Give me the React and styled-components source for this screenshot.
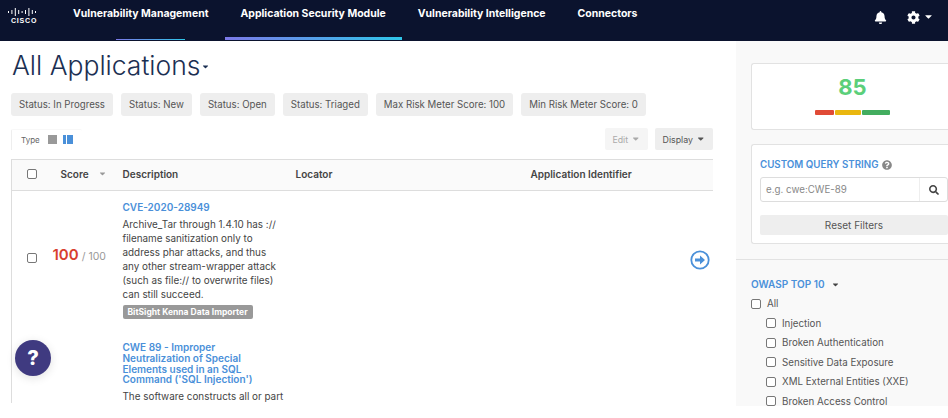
import React from 'react';
import styled, { createGlobalStyle } from 'styled-components';
import { FaBell, FaCog, FaCaretDown, FaSearch, FaQuestionCircle } from 'react-icons/fa';

const GlobalStyle = createGlobalStyle`
  html, body {
    margin: 0;
    padding: 0;
    background: #fff;
    font-family: Inter, "Liberation Sans", sans-serif;
    color: #333;
  }
  * { box-sizing: border-box; }
`;

const Page = styled.div`
  position: relative;
  width: 948px;
  height: 406px;
  overflow: hidden;
`;

const NavBar = styled.nav`
  height: 41px;
  background: #0b132e;
  display: flex;
  color: #fff;
`;

const LogoWrap = styled.div`
  width: 57px;
  padding: 8px 0 0 8px;
  display: flex;
  flex-direction: column;
  align-items: flex-start;
`;

const LogoText = styled.span`
  font-size: 7px;
  line-height: 8px;
  font-weight: 700;
  letter-spacing: 0.8px;
  margin: 1px 0 0 3px;
  font-family: "Liberation Sans", sans-serif;
`;

const NavItems = styled.div`
  display: flex;
`;

const NavItem = styled.a`
  position: relative;
  padding: 7px 16px 0;
  font-size: 10.47px;
  line-height: 14px;
  font-weight: 700;
  white-space: nowrap;

  &::after {
    content: '';
    position: absolute;
    bottom: 1px;
    left: ${({ $short }) => ($short ? '59px' : '0')};
    right: ${({ $short }) => ($short ? '40px' : '0')};
    height: ${({ $active }) => ($active ? '3px' : '1px')};
    display: ${({ $active, $short }) => ($active || $short ? 'block' : 'none')};
    background: linear-gradient(90deg, #7c79e8, #2fc6ea);
  }
`;

const NavIcons = styled.div`
  margin-left: auto;
  padding: 11px 14px 0 0;
  display: flex;
  align-items: flex-start;
  font-size: 13px;
`;

const BellBtn = styled.span`
  margin-right: 20px;
  display: flex;
`;

const GearCaret = styled(FaCaretDown)`
  margin-left: 3px;
  font-size: 11px;
`;

const Main = styled.div`
  display: flex;
  height: 365px;
`;

const Content = styled.main`
  width: 736px;
  padding: 0 23px 0 11px;
  overflow: hidden;
`;

const TitleRow = styled.div`
  display: flex;
  align-items: center;
  height: 52px;
  padding-bottom: 4px;
`;

const Title = styled.h1`
  margin: 0 0 0 1px;
  font-size: 26.5px;
  font-weight: 300;
  line-height: 47px;
  color: #1b2f52;
`;

const TitleCaret = styled(FaCaretDown)`
  font-size: 9px;
  color: #1b2f52;
  margin-top: 3px;
`;

const Pills = styled.div`
  display: flex;
  gap: 8px;
`;

const Pill = styled.span`
  height: 23px;
  line-height: 23px;
  padding: 0 8px;
  background: #eee;
  border-radius: 3px;
  font-size: 9.67px;
  color: #555;
  white-space: nowrap;
`;

const Toolbar = styled.div`
  display: flex;
  align-items: center;
  margin-top: 12px;
  height: 22px;
`;

const TypeBox = styled.div`
  display: flex;
  align-items: center;
  width: 71px;
  height: 21px;
  padding-left: 9px;
  border-left: 1px solid #eee;
  border-top: 1px solid #f8f8f8;
  border-radius: 2px 2px 0 0;
  font-size: 8px;
  color: #666;
`;

const TypeIcon = styled.span`
  display: block;
  width: ${({ $wide }) => ($wide ? '10px' : '9px')};
  height: 9px;
  margin-left: ${({ $wide }) => ($wide ? '6px' : '8px')};
  background: ${({ $wide }) =>
    $wide
      ? 'linear-gradient(90deg, #4a90d9 0 3px, #fff 3px 4px, #4a90d9 4px)'
      : '#999'};
`;

const ToolButton = styled.button`
  display: flex;
  align-items: center;
  gap: 3px;
  height: 22px;
  padding: 0 7.5px;
  margin-left: ${({ $first }) => ($first ? 'auto' : '7px')};
  border: none;
  border-radius: 2px;
  font-family: inherit;
  font-size: 8.8px;
  background: ${({ $disabled }) => ($disabled ? '#f5f5f5' : '#eee')};
  color: ${({ $disabled }) => ($disabled ? '#aaa' : '#555')};
`;

const ToolCaret = styled(FaCaretDown)`
  font-size: 9.5px;
`;

const Table = styled.table`
  width: 702px;
  margin-top: 9px;
  border-collapse: collapse;
  table-layout: fixed;
  border-left: 1px solid #ddd;
`;

const HeadRow = styled.tr`
  height: 31px;
  background: #fafafa;
  border-top: 1px solid #ddd;
  border-bottom: 1px solid #ddd;
`;

const Th = styled.th`
  width: ${({ $w }) => $w || 'auto'};
  padding: 0 8px 3px;
  text-align: left;
  font-size: 10px;
  font-weight: 600;
  color: #444;
`;

const Td = styled.td`
  padding: ${({ $top }) => ($top ? '10px 8px 0' : '0 8px')};
  vertical-align: ${({ $top }) => ($top ? 'top' : 'middle')};
`;

const Check = styled.input.attrs({ type: 'checkbox' })`
  appearance: none;
  display: block;
  flex: none;
  width: 10px;
  height: 10px;
  margin: ${({ $center }) => ($center ? '0 0 0 7px' : '0')};
  background: #fff;
  border: 1px solid #777;
  border-radius: 2px;
`;

const SortCell = styled.div`
  display: flex;
  align-items: center;
  justify-content: space-between;
  color: #444;
`;

const SortCaret = styled(FaCaretDown)`
  color: #999;
  font-size: 9px;
`;

const ScoreWrap = styled.div`
  white-space: nowrap;
  margin: 0 0 8px -8px;
`;

const ScoreValue = styled.span`
  font-size: 15px;
  font-weight: 600;
  color: #d8402f;
`;

const ScoreMax = styled.span`
  font-size: 10.5px;
  color: #999;
  margin-left: 3px;
`;

const VulnTitle = styled.a`
  display: block;
  font-size: 10px;
  line-height: 10.7px;
  font-weight: 600;
  color: #4a90d9;
`;

const VulnText = styled.p`
  margin: 4px -3px 0 0;
  font-size: 9.9px;
  line-height: 14px;
  color: #444;
  white-space: ${({ $oneLine }) => ($oneLine ? 'nowrap' : 'normal')};
`;

const Badge = styled.span`
  display: block;
  width: fit-content;
  margin-top: 4px;
  padding: 0 5px;
  height: 14px;
  line-height: 14px;
  background: #999;
  border-radius: 2px;
  font-size: 8.5px;
  font-weight: 700;
  color: #fff;
  white-space: nowrap;
`;

const RowGap = styled.div`
  height: ${({ $h }) => $h};
`;

const ArrowCell = styled.div`
  display: flex;
  justify-content: flex-end;
  margin: 4px -5px 0 0;
`;

const Sidebar = styled.aside`
  flex: 1;
  background: #f9f9f9;
  display: flex;
  flex-direction: column;
  overflow: hidden;
`;

const SideTop = styled.div`
  padding: 22px 0 15px 15px;
  border-bottom: 1px solid #e2e2e2;
`;

const Card = styled.section`
  background: #fff;
  border: 1px solid #e2e2e2;
  border-right: none;
  border-radius: 3px 0 0 3px;
  width: 202px;
`;

const ScoreCard = styled(Card)`
  height: 67px;
  padding-top: 10px;
  margin-bottom: 14px;
  display: flex;
  flex-direction: column;
  align-items: center;
`;

const BigScore = styled.div`
  font-size: 22px;
  line-height: 27px;
  font-weight: 700;
  color: #5bcf7a;
`;

const Meter = styled.div`
  display: flex;
  gap: 1px;
  margin-top: 9px;
  width: 75px;
  height: 5px;
`;

const MeterPart = styled.span`
  flex: ${({ $f }) => $f};
  background: ${({ $c }) => $c};
  border-radius: 1px;
`;

const QueryCard = styled(Card)`
  height: 100px;
  padding: 14px 0 0 8px;
`;

const FilterHeading = styled.h4`
  margin: 0;
  display: flex;
  align-items: center;
  gap: 4px;
  font-size: ${({ $small }) => ($small ? '9.75px' : '10px')};
  line-height: 12px;
  font-weight: 600;
  color: #4a90d9;
`;

const HelpIcon = styled(FaQuestionCircle)`
  color: #888;
  font-size: 10px;
`;

const QueryInput = styled.div`
  display: flex;
  width: 188px;
  height: 25px;
  margin-top: 6px;
  border: 1px solid #ddd;
  border-radius: 3px;
`;

const QueryField = styled.span`
  flex: 1;
  padding-left: 5px;
  line-height: 23px;
  font-size: 9.75px;
  color: #888;
`;

const SearchBtn = styled.span`
  width: 28px;
  display: flex;
  align-items: center;
  justify-content: center;
  border-left: 1px solid #eee;
  font-size: 10px;
  color: #444;
`;

const ResetBtn = styled.button`
  display: block;
  width: 188px;
  height: 20px;
  margin-top: 13px;
  border: none;
  border-radius: 2px;
  background: #eee;
  font-family: inherit;
  font-size: 10px;
  color: #555;
`;

const FilterSection = styled.div`
  padding: 18px 0 0 15px;
`;

const FilterCaret = styled(FaCaretDown)`
  color: #444;
  font-size: 9px;
  margin-left: 3px;
`;

const FilterRow = styled.label`
  display: flex;
  align-items: center;
  height: 19.5px;
  gap: 6px;
  padding-left: ${({ $sub }) => ($sub ? '15px' : '0')};
  font-size: 9.75px;
  color: #555;
`;

const FilterList = styled.div`
  margin-top: 4px;
`;

const HelpFab = styled.button`
  position: absolute;
  left: 15px;
  top: 340px;
  width: 36px;
  height: 36px;
  border: none;
  border-radius: 50%;
  background: #3f3a80;
  color: #fff;
  font-family: inherit;
  font-size: 20px;
  font-weight: 800;
  box-shadow: 0 2px 10px rgba(0, 0, 0, 0.12);
`;

const CiscoMark = () => (
  <svg width="28" height="8" viewBox="0 0 28 8" fill="#fff">
    {[
      [0, 3, 2], [3.4, 2, 4], [6.8, 0, 8], [10.2, 2, 4], [13.6, 3, 2],
      [17, 2, 4], [20.4, 0, 8], [23.8, 2, 4], [27, 3, 2],
    ].map(([x, y, h]) => (
      <rect key={x} x={x} y={y} width="1" height={h} />
    ))}
  </svg>
);

const ArrowRing = () => (
  <svg width="20" height="20" viewBox="0 0 20 20">
    <circle cx="10" cy="10" r="8.7" fill="none" stroke="#4a90d9" strokeWidth="1.8" />
    <path d="M5 8.4h5V5.4l5 4.6-5 4.6v-3H5z" fill="#4a90d9" />
  </svg>
);

const filters = [
  'Injection',
  'Broken Authentication',
  'Sensitive Data Exposure',
  'XML External Entities (XXE)',
  'Broken Access Control',
];

const pills = [
  'Status: In Progress',
  'Status: New',
  'Status: Open',
  'Status: Triaged',
  'Max Risk Meter Score: 100',
  'Min Risk Meter Score: 0',
];

export default function App() {
  return (
    <Page>
      <GlobalStyle />
      <NavBar>
        <LogoWrap>
          <CiscoMark />
          <LogoText>CISCO</LogoText>
        </LogoWrap>
        <NavItems>
          <NavItem $short>Vulnerability Management</NavItem>
          <NavItem $active>Application Security Module</NavItem>
          <NavItem>Vulnerability Intelligence</NavItem>
          <NavItem>Connectors</NavItem>
        </NavItems>
        <NavIcons>
          <BellBtn><FaBell /></BellBtn>
          <FaCog />
          <GearCaret />
        </NavIcons>
      </NavBar>
      <Main>
        <Content>
          <TitleRow>
            <Title>All Applications</Title>
            <TitleCaret />
          </TitleRow>
          <Pills>
            {pills.map((p) => (
              <Pill key={p}>{p}</Pill>
            ))}
          </Pills>
          <Toolbar>
            <TypeBox>
              Type
              <TypeIcon />
              <TypeIcon $wide />
            </TypeBox>
            <ToolButton $first $disabled>Edit <ToolCaret /></ToolButton>
            <ToolButton>Display <ToolCaret /></ToolButton>
          </Toolbar>
          <Table>
            <thead>
              <HeadRow>
                <Th $w="41px"><Check $center /></Th>
                <Th $w="62px">
                  <SortCell>Score <SortCaret /></SortCell>
                </Th>
                <Th $w="173px">Description</Th>
                <Th $w="235px">Locator</Th>
                <Th>Application Identifier</Th>
              </HeadRow>
            </thead>
            <tbody>
              <tr>
                <Td><Check $center /></Td>
                <Td>
                  <ScoreWrap>
                    <ScoreValue>100</ScoreValue>
                    <ScoreMax>/ 100</ScoreMax>
                  </ScoreWrap>
                </Td>
                <Td $top>
                  <RowGap $h="1px" />
                  <VulnTitle>CVE-2020-28949</VulnTitle>
                  <VulnText>
                    Archive_Tar through 1.4.10 has :// filename sanitization only to address phar
                    attacks, and thus any other stream-wrapper attack (such as file:// to overwrite
                    files) can still succeed.
                  </VulnText>
                  <Badge>BitSight Kenna Data Importer</Badge>
                  <RowGap $h="7px" />
                </Td>
                <Td />
                <Td><ArrowCell><ArrowRing /></ArrowCell></Td>
              </tr>
              <tr>
                <Td />
                <Td />
                <Td $top>
                  <RowGap $h="6.6px" />
                  <VulnTitle>CWE 89 - Improper Neutralization of Special Elements used in an SQL Command ('SQL Injection')</VulnTitle>
                  <VulnText $oneLine>The software constructs all or part</VulnText>
                </Td>
                <Td />
                <Td />
              </tr>
            </tbody>
          </Table>
        </Content>
        <Sidebar>
          <SideTop>
            <ScoreCard>
              <BigScore>85</BigScore>
              <Meter>
                <MeterPart $f="19" $c="#e04a36" />
                <MeterPart $f="26" $c="#eab70f" />
                <MeterPart $f="28" $c="#43ad5f" />
              </Meter>
            </ScoreCard>
            <QueryCard>
              <FilterHeading $small>CUSTOM QUERY STRING <HelpIcon /></FilterHeading>
              <QueryInput>
                <QueryField>e.g. cwe:CWE-89</QueryField>
                <SearchBtn><FaSearch /></SearchBtn>
              </QueryInput>
              <ResetBtn>Reset Filters</ResetBtn>
            </QueryCard>
          </SideTop>
          <FilterSection>
            <FilterHeading>OWASP TOP 10 <FilterCaret /></FilterHeading>
            <FilterList>
              <FilterRow><Check /> All</FilterRow>
              {filters.map((f) => (
                <FilterRow key={f} $sub><Check /> {f}</FilterRow>
              ))}
            </FilterList>
          </FilterSection>
        </Sidebar>
      </Main>
      <HelpFab>?</HelpFab>
    </Page>
  );
}
